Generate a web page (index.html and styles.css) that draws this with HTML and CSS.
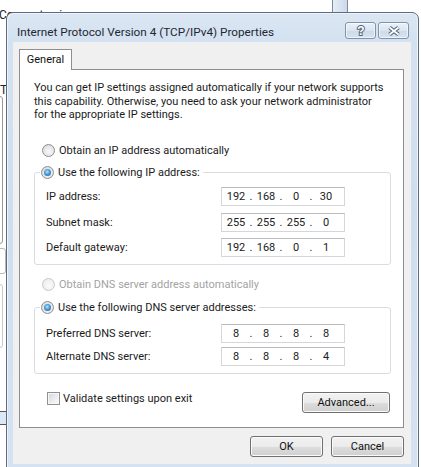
FILE: index.html
```html
<!DOCTYPE html>
<html lang="en">
<head>
<meta charset="utf-8">
<title>Internet Protocol Version 4 (TCP/IPv4) Properties</title>
<link rel="stylesheet" href="styles.css">
</head>
<body>
<div class="desk">
  <div class="bg-text">Connect using:</div>
  <div class="bg-t">T</div>
  <div class="bg-box bg-box1"></div>
  <div class="bg-box bg-box2"></div>
  <div class="bg-box bg-box3"></div>
  <div class="bg-band"></div>
  <div class="bg-scroll"></div>
</div>

<div class="window">
  <div class="titlebar">
    <span class="title">Internet Protocol Version 4 (TCP/IPv4) Properties</span>
    <div class="caption-btns">
      <span class="cap-btn">
        <svg width="12" height="13" viewBox="0 0 12 13"><text x="6" y="11" text-anchor="middle" class="q">?</text></svg>
      </span>
      <span class="cap-btn">
        <svg width="14" height="12" viewBox="0 0 14 12"><path d="M2.5 2.5 L11.5 9.5 M11.5 2.5 L2.5 9.5" class="x-out"/><path d="M2.5 2.5 L11.5 9.5 M11.5 2.5 L2.5 9.5" class="x-in"/></svg>
      </span>
    </div>
  </div>

  <div class="client">
    <div class="tabs"><span class="tab">General</span></div>
    <div class="panel">
      <p class="intro">You can get IP settings assigned automatically if your network supports<br>this capability. Otherwise, you need to ask your network administrator<br>for the appropriate IP settings.</p>

      <div class="opt opt-ip"><span class="radio"></span><span>Obtain an IP address automatically</span></div>

      <fieldset class="group group-ip">
        <legend><span class="radio checked"></span><span>Use the following IP address:</span></legend>
        <div class="fields">
          <span class="lbl">IP address:</span>
          <div class="ip"><span class="oct">192</span><span class="dot">.</span><span class="oct">168</span><span class="dot">.</span><span class="oct">0</span><span class="dot">.</span><span class="oct">30</span></div>
          <span class="lbl">Subnet mask:</span>
          <div class="ip"><span class="oct">255</span><span class="dot">.</span><span class="oct">255</span><span class="dot">.</span><span class="oct">255</span><span class="dot">.</span><span class="oct">0</span></div>
          <span class="lbl">Default gateway:</span>
          <div class="ip"><span class="oct">192</span><span class="dot">.</span><span class="oct">168</span><span class="dot">.</span><span class="oct">0</span><span class="dot">.</span><span class="oct">1</span></div>
        </div>
      </fieldset>

      <div class="opt opt-dns disabled"><span class="radio"></span><span>Obtain DNS server address automatically</span></div>

      <fieldset class="group group-dns">
        <legend><span class="radio checked"></span><span>Use the following DNS server addresses:</span></legend>
        <div class="fields fields-dns">
          <span class="lbl">Preferred DNS server:</span>
          <div class="ip"><span class="oct">8</span><span class="dot">.</span><span class="oct">8</span><span class="dot">.</span><span class="oct">8</span><span class="dot">.</span><span class="oct">8</span></div>
          <span class="lbl">Alternate DNS server:</span>
          <div class="ip"><span class="oct">8</span><span class="dot">.</span><span class="oct">8</span><span class="dot">.</span><span class="oct">8</span><span class="dot">.</span><span class="oct">4</span></div>
        </div>
      </fieldset>

      <div class="panel-foot">
        <span class="check"><span class="checkbox"></span><span>Validate settings upon exit</span></span>
        <span class="btn btn-adv">Advanced...</span>
      </div>
    </div>

    <div class="actions">
      <span class="btn btn-dlg">OK</span>
      <span class="btn btn-dlg">Cancel</span>
    </div>
  </div>
</div>
</body>
</html>
```

FILE: styles.css
```css
html, body {
  margin: 0;
  padding: 0;
}
body {
  width: 421px;
  height: 467px;
  overflow: hidden;
  position: relative;
  background: #ffffff;
  font-family: Roboto, "Noto Sans", "Liberation Sans", sans-serif;
  font-size: 11px;
  color: #1b1b1b;
}

/* background desktop remnants */
.desk {
  position: absolute;
  inset: 0;
}
.bg-text {
  position: absolute;
  left: -1px;
  top: 9px;
  font-size: 12px;
  line-height: 12px;
  color: #222;
}
.bg-t {
  position: absolute;
  left: 0;
  top: 83px;
  font-size: 12px;
  color: #222;
}
.bg-box {
  position: absolute;
  left: -12px;
  border: 1px solid #9a9a9a;
  border-radius: 3px;
}
.bg-box1 { top: 96px; width: 13px; height: 146px; }
.bg-box2 { top: 248px; width: 16px; height: 24px; border-color: #b8b8b8; }
.bg-box3 { top: 284px; width: 13px; height: 62px; border-color: #c8c8c8; }
.bg-band {
  position: absolute;
  left: 0;
  top: 411px;
  width: 8px;
  height: 12px;
  border-top: 1px solid #555;
  border-bottom: 1px solid #555;
  background: #dbe8f5;
}
.bg-scroll {
  position: absolute;
  left: 332px;
  top: 0;
  width: 14px;
  height: 14px;
  border-left: 1px solid #7d8a99;
  border-right: 1px solid #7d8a99;
  background: linear-gradient(to right, #e6eef7, #cbd9ea);
}

/* window */
.window {
  position: absolute;
  left: 6px;
  top: 12px;
  width: 413px;
  height: 460px;
  box-sizing: border-box;
  border: 1px solid #5d6b7c;
  border-radius: 7px 7px 0 0;
  padding: 0 7px 7px 6px;
  display: flex;
  flex-direction: column;
  background: linear-gradient(to bottom, #dbe6f3 0px, #d3e1f0 30px, #cfdeef 200px, #d4e2f1 100%);
  box-shadow: inset 1px 1px 0 #eef4fb, inset -1px 0 0 #eef4fb;
}
.titlebar {
  height: 29px;
  flex: none;
  display: flex;
  justify-content: space-between;
  align-items: flex-start;
  padding: 0 2px 0 4px;
}
.title {
  margin-top: 11px;
  font-size: 11.75px;
  line-height: 16px;
  color: #1e2733;
  white-space: nowrap;
}
.caption-btns {
  margin-top: 9px;
  display: flex;
  gap: 2px;
}
.cap-btn {
  width: 31px;
  height: 17px;
  box-sizing: border-box;
  border: 1px solid #8193a8;
  border-radius: 3px;
  background: linear-gradient(to bottom, #eaf1f9 0%, #dae5f2 50%, #ccdaea 51%, #d6e3f1 100%);
  box-shadow: inset 0 0 0 1px rgba(255,255,255,0.6);
  display: flex;
  align-items: center;
  justify-content: center;
}
.q {
  font-family: "Liberation Sans", sans-serif;
  font-weight: bold;
  font-size: 12px;
  fill: #ffffff;
  stroke: #56667a;
  stroke-width: 2px;
  paint-order: stroke;
}
.x-out {
  stroke: #56667a;
  stroke-width: 4;
  fill: none;
}
.x-in {
  stroke: #ffffff;
  stroke-width: 1.8;
  fill: none;
}

/* client */
.client {
  flex: 1;
  background: #f0f0f0;
  padding: 7px 7px 0 6px;
  display: flex;
  flex-direction: column;
}
.tabs {
  display: flex;
  height: 20px;
}
.tab {
  position: relative;
  z-index: 1;
  width: 53px;
  height: 21px;
  box-sizing: border-box;
  border: 1px solid #8c8e94;
  border-bottom: none;
  background: #ffffff;
  text-align: center;
  line-height: 20px;
  color: #111;
}
.panel {
  height: 359px;
  box-sizing: border-box;
  border: 1px solid #8c8e94;
  background: #ffffff;
  padding-top: 11px;
  display: flex;
  flex-direction: column;
}
.intro {
  margin: 0 0 0 14px;
  line-height: 13.5px;
  height: 41px;
  white-space: nowrap;
}

.opt {
  display: flex;
  align-items: center;
  gap: 4px;
  height: 16px;
  margin-left: 22px;
}
.opt-ip { margin-top: 20px; }
.opt-dns { margin-top: 11px; }
.disabled { color: #a3a3a3; }

.radio {
  position: relative;
  flex: none;
  width: 13px;
  height: 13px;
  box-sizing: border-box;
  border-radius: 50%;
  border: 1px solid #8b8f94;
  background: radial-gradient(circle at 55% 60%, #f8f8f8 0%, #e6e6e6 55%, #cdcdcd 100%);
}
.radio.checked::after {
  content: "";
  position: absolute;
  left: 2px;
  top: 2px;
  width: 7px;
  height: 7px;
  border-radius: 50%;
  background: radial-gradient(circle at 45% 40%, #b9e6fb 0%, #4a9ad6 45%, #1d5a93 100%);
}
.disabled .radio {
  border-color: #c6c8ca;
  background: radial-gradient(circle at 55% 60%, #fbfbfb 0%, #f0f0f0 60%, #e4e4e4 100%);
}

.group {
  margin: 0 12px 0 14px;
  min-width: 0;
  border: 1px solid #d7dde3;
  border-radius: 3px;
  padding: 7px 12px 7px 11px;
}
.group-ip { margin-top: 6px; }
.group-dns { margin-top: 7px; padding-top: 9px; }
.group legend {
  display: flex;
  align-items: center;
  gap: 4px;
  height: 16px;
  padding: 0 3px 0 1px;
  margin-left: -6px;
}
.fields {
  display: grid;
  grid-template-columns: 175px 124px;
  grid-auto-rows: 19px;
  row-gap: 6.5px;
  align-items: center;
}
.fields-dns { row-gap: 4px; }
.lbl {
  white-space: nowrap;
}
.ip {
  height: 19px;
  box-sizing: border-box;
  border: 1px solid #d3d6da;
  border-top-color: #b9bcc1;
  background: #fff;
  display: flex;
  align-items: center;
  padding-left: 2px;
}
.oct {
  width: 24px;
  text-align: center;
}
.dot {
  width: 6px;
  text-align: center;
}

.panel-foot {
  margin-top: 16px;
  padding: 0 13px 0 27px;
  display: flex;
  justify-content: space-between;
  align-items: flex-start;
}
.check {
  display: flex;
  align-items: center;
  gap: 3px;
  height: 14px;
  margin-top: 1px;
}
.checkbox {
  flex: none;
  width: 13px;
  height: 13px;
  box-sizing: border-box;
  border: 1px solid #8e9195;
  background: linear-gradient(135deg, #d6d7d9 0%, #eeeeee 60%, #fafafa 100%);
  box-shadow: inset 0 0 0 1px #f6f6f6;
}

.btn {
  display: flex;
  align-items: center;
  justify-content: center;
  height: 21px;
  box-sizing: border-box;
  border: 1px solid #707070;
  border-radius: 3px;
  background: linear-gradient(to bottom, #f2f2f2 0%, #ebebeb 50%, #dddddd 51%, #cfcfcf 100%);
  box-shadow: inset 0 0 0 1px #fafafa;
  color: #111;
}
.btn-adv {
  width: 88px;
  margin-top: 2px;
}
.actions {
  margin-top: 8px;
  display: flex;
  justify-content: flex-end;
  gap: 8px;
}
.btn-dlg {
  width: 73px;
}
```
